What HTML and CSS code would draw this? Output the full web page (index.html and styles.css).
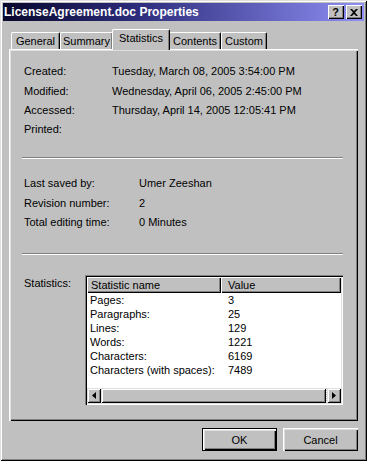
FILE: index.html
```html
<!DOCTYPE html>
<html lang="en">
<head>
    <meta charset="UTF-8">
    <title>LicenseAgreement.doc Properties</title>
    <link rel="stylesheet" href="styles.css">
</head>
<body>

    <div class="window">
        <!-- Barre de titre -->
        <div class="titlebar">
            <span class="title">LicenseAgreement.doc Properties</span>
            <div class="caption-btns">
                <div class="cap-btn help">?</div>
                <div class="cap-btn">
                    <svg width="8" height="7" viewBox="0 0 8 7">
                        <path d="M0 0h2l2 2 2-2h2L5 3.5 8 7H6L4 5 2 7H0l3-3.5z" fill="#000"/>
                    </svg>
                </div>
            </div>
        </div>

        <div class="dialog-body">
            <!-- Onglets -->
            <div class="tabs">
                <div class="tab w-general">General</div>
                <div class="tab w-summary">Summary</div>
                <div class="tab active">Statistics</div>
                <div class="tab w-contents">Contents</div>
                <div class="tab w-custom">Custom</div>
            </div>

            <div class="panel">
                <div class="props dates">
                    <span>Created:</span><span>Tuesday, March 08, 2005 3:54:00 PM</span>
                    <span>Modified:</span><span>Wednesday, April 06, 2005 2:45:00 PM</span>
                    <span>Accessed:</span><span>Thursday, April 14, 2005 12:05:41 PM</span>
                    <span>Printed:</span><span></span>
                </div>

                <div class="separator"></div>

                <div class="props saved">
                    <span>Last saved by:</span><span>Umer Zeeshan</span>
                    <span>Revision number:</span><span>2</span>
                    <span>Total editing time:</span><span>0 Minutes</span>
                </div>

                <div class="separator second"></div>

                <div class="stats">
                    <span class="stats-label">Statistics:</span>
                    <div class="listview">
                        <div class="lv-header">
                            <div class="lv-col name">Statistic name</div>
                            <div class="lv-col value">Value</div>
                        </div>
                        <div class="lv-rows">
                            <div class="lv-row"><span>Pages:</span><span>3</span></div>
                            <div class="lv-row"><span>Paragraphs:</span><span>25</span></div>
                            <div class="lv-row"><span>Lines:</span><span>129</span></div>
                            <div class="lv-row"><span>Words:</span><span>1221</span></div>
                            <div class="lv-row"><span>Characters:</span><span>6169</span></div>
                            <div class="lv-row"><span>Characters (with spaces):</span><span>7489</span></div>
                        </div>
                        <!-- Barre de défilement horizontale -->
                        <div class="hscroll">
                            <div class="sb-btn">
                                <svg width="4" height="7" viewBox="0 0 4 7"><path d="M4 0v7L0 3.5z" fill="#000"/></svg>
                            </div>
                            <div class="sb-thumb"></div>
                            <div class="sb-track"></div>
                            <div class="sb-btn">
                                <svg width="4" height="7" viewBox="0 0 4 7"><path d="M0 0v7l4-3.5z" fill="#000"/></svg>
                            </div>
                        </div>
                    </div>
                </div>
            </div>

            <!-- Boutons -->
            <div class="buttons">
                <div class="btn default"><span>OK</span></div>
                <div class="btn">Cancel</div>
            </div>
        </div>
    </div>

</body>
</html>
```

FILE: styles.css
```css
/* Style général */
body {
    margin: 0;
    font-family: "Liberation Sans", Arial, sans-serif;
    font-size: 11px;
    color: #000;
}
.window {
    width: 367px;
    height: 461px;
    box-sizing: border-box;
    padding: 3px;
    background: #c0c0c0;
    box-shadow: inset 1px 1px #dfdfdf, inset -1px -1px #000, inset 2px 2px #fff, inset -2px -2px #808080;
}

/* Barre de titre */
.titlebar {
    height: 18px;
    display: flex;
    align-items: center;
    justify-content: space-between;
    padding: 0 2px 0 1px;
    background: linear-gradient(to right, #08082c, #2a2a78 35%, #8e8ef4);
    color: white;
}
.title {
    font-weight: bold;
    font-size: 12px;
}
.caption-btns {
    display: flex;
    gap: 2px;
}
.cap-btn {
    width: 16px;
    height: 14px;
    box-sizing: border-box;
    background: #c0c0c0;
    box-shadow: inset 1px 1px #fff, inset -1px -1px #000, inset -2px -2px #808080;
    display: flex;
    align-items: center;
    justify-content: center;
    color: #000;
}
.cap-btn.help {
    font-weight: bold;
    font-size: 11px;
    line-height: 14px;
    padding-right: 1px;
}

.dialog-body {
    padding: 0 6px;
}

/* Onglets */
.tabs {
    display: flex;
    align-items: flex-end;
    height: 20px;
    margin-top: 8px;
    padding-left: 2px;
    position: relative;
    z-index: 1;
}
.tab {
    height: 17px;
    box-sizing: border-box;
    border-top: 1px solid #fff;
    border-left: 1px solid #fff;
    border-right: 1px solid #000;
    border-radius: 2px 2px 0 0;
    box-shadow: inset -1px 0 #808080;
    background: #c0c0c0;
    text-align: center;
    line-height: 16px;
}
.w-general { width: 49px; }
.w-summary { width: 53px; }
.w-contents { width: 52px; }
.w-custom { width: 46px; }
.tab.active {
    width: 58px;
    height: 21px;
    margin: 0 -1px -1px -1px;
    line-height: 17px;
    position: relative;
    z-index: 2;
}

/* Panneau */
.panel {
    width: 349px;
    height: 372px;
    box-sizing: border-box;
    padding: 12px 15px 0 15px;
    box-shadow: inset 1px 1px #fff, inset 2px 2px #dfdfdf, inset -1px -1px #000, inset -2px -2px #808080;
}
.props {
    display: grid;
    align-items: center;
}
.dates {
    grid-template-columns: 88px 1fr;
    grid-template-rows: 20px 19px 19px 19px;
}
.saved {
    margin-top: 14px;
    grid-template-columns: 115px 1fr;
    grid-template-rows: 20px 19px 20px;
}
.separator {
    width: 321px;
    margin: 19px 0 0 -2px;
    border-top: 1px solid #808080;
    border-bottom: 1px solid #fff;
}
.separator.second {
    margin-top: 21px;
}

/* Statistiques */
.stats {
    display: flex;
    margin-top: 20px;
}
.stats-label {
    width: 61px;
    padding-top: 2px;
}
.listview {
    width: 258px;
    height: 130px;
    box-sizing: border-box;
    padding: 2px;
    background: #fff;
    box-shadow: inset 1px 1px #808080, inset 2px 2px #000, inset -1px -1px #fff, inset -2px -2px #dfdfdf;
    display: flex;
    flex-direction: column;
}
.lv-header {
    display: flex;
    height: 16px;
    background: #c0c0c0;
}
.lv-col {
    box-sizing: border-box;
    height: 16px;
    line-height: 16px;
    box-shadow: inset 1px 1px #fff, inset -1px -1px #000, inset -2px -2px #808080;
}
.lv-col.name {
    width: 134px;
    padding-left: 4px;
}
.lv-col.value {
    flex: 1;
    padding-left: 7px;
}
.lv-rows {
    flex: 1;
}
.lv-row {
    display: flex;
    height: 14px;
    line-height: 14px;
}
.lv-row span:first-child {
    width: 134px;
    padding-left: 3px;
}
.lv-row span:last-child {
    padding-left: 4px;
}

/* Barre de défilement */
.hscroll {
    display: flex;
    height: 15px;
    background: #c0c0c0;
}
.sb-btn, .sb-thumb {
    box-sizing: border-box;
    background: #c0c0c0;
    box-shadow: inset 1px 1px #dfdfdf, inset -1px -1px #000, inset 2px 2px #fff, inset -2px -2px #808080;
}
.sb-btn {
    width: 14px;
    display: flex;
    align-items: center;
    justify-content: center;
}
.sb-thumb {
    width: 225px;
}
.sb-track {
    flex: 1;
    background: repeating-conic-gradient(#fff 0 25%, #c0c0c0 0 50%) 0 0 / 2px 2px;
}

/* Boutons */
.buttons {
    display: flex;
    justify-content: flex-end;
    gap: 6px;
    margin-top: 7px;
}
.btn {
    width: 75px;
    height: 23px;
    box-sizing: border-box;
    background: #c0c0c0;
    box-shadow: inset 1px 1px #fff, inset 2px 2px #dfdfdf, inset -1px -1px #000, inset -2px -2px #808080;
    display: flex;
    align-items: center;
    justify-content: center;
}
.btn.default {
    border: 1px solid #000;
    box-shadow: inset 1px 1px #fff, inset 2px 2px #dfdfdf, inset -1px -1px #000, inset -2px -2px #808080;
}
```
